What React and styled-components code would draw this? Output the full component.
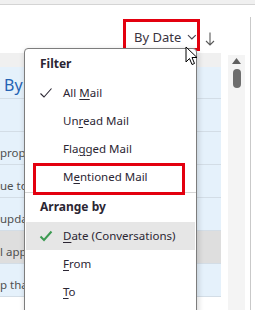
import React from "react";
import styled, { createGlobalStyle } from "styled-components";

const GlobalStyle = createGlobalStyle`
  html, body {
    margin: 0;
    padding: 0;
    background: #ffffff;
    overflow: hidden;
  }
  body {
    font-family: "Noto Sans", "Open Sans", sans-serif;
  }
`;

const Frame = styled.div`
  position: relative;
  width: 255px;
  height: 310px;
  overflow: hidden;
  display: flex;
  flex-direction: column;
  background: #ffffff;
`;

const TopStrip = styled.div`
  height: 4px;
  background: #f0f0f0;
  border-bottom: 1px solid #d4d4d4;
`;

const Workspace = styled.div`
  flex: 1;
  display: flex;
`;

const Main = styled.div`
  width: 250px;
  display: flex;
  flex-direction: column;
`;

const Edge = styled.div`
  flex: 1;
  margin-top: 12px;
  border-left: 1px solid #c9c9c9;
`;

const Toolbar = styled.div`
  height: 48px;
  display: flex;
  justify-content: flex-end;
  align-items: flex-start;
  gap: 5px;
  padding: 14px 35px 0 0;
  box-sizing: border-box;
`;

const SortButton = styled.div`
  width: 77px;
  height: 32px;
  box-sizing: border-box;
  border: 3px solid #e3000f;
  display: flex;
  align-items: center;
  padding: 3px 0 0 8px;
  gap: 6px;
  font-size: 13px;
  color: #3a3340;
  white-space: nowrap;
`;

const ArrowSlot = styled.div`
  padding-top: 13px;
  display: flex;
`;

const ListArea = styled.div`
  flex: 1;
  display: flex;
`;

const List = styled.div`
  width: 221px;
  display: flex;
  flex-direction: column;
`;

const ListHeader = styled.div`
  height: 14px;
  background: #f0f0f0;
`;

const Row = styled.div`
  height: ${(p) => (p.$first ? 32 : 33)}px;
  box-sizing: border-box;
  border-bottom: 1px solid #d3dde6;
  background: ${(p) => (p.$hover ? "#dedede" : "#e5f1fb")};
  display: flex;
  align-items: flex-end;
  padding-bottom: 3px;
  overflow: hidden;
  white-space: nowrap;
`;

const GroupLabel = styled.span`
  font-size: 16px;
  line-height: 20px;
  color: #2563b3;
  padding-left: 4px;
`;

const Preview = styled.span`
  font-size: 11.5px;
  line-height: 16px;
  color: #505050;
`;

const Track = styled.div`
  width: 17px;
  margin: 2px 0 0 7px;
  background: #f4f4f4;
  display: flex;
  flex-direction: column;
  align-items: center;
  padding-top: 3px;
  gap: 5px;
`;

const Thumb = styled.div`
  width: 8px;
  height: 19px;
  border-radius: 4px;
  background: #6e6e6e;
`;

const Menu = styled.div`
  position: absolute;
  left: 24px;
  top: 48px;
  width: 173px;
  height: 280px;
  box-sizing: border-box;
  background: #ffffff;
  border: 1px solid #7d7d7d;
  border-radius: 4px 4px 0 0;
  box-shadow: 1px 2px 6px rgba(0, 0, 0, 0.18);
  display: flex;
  flex-direction: column;
  color: #2b2633;
  font-size: 11.5px;
`;

const SectionTitle = styled.div`
  height: 29px;
  box-sizing: border-box;
  padding: 2px 0 0 15px;
  line-height: 24px;
  font-weight: 700;
  font-size: 12px;
  margin-top: ${(p) => (p.$top ? 1 : 0)}px;
`;

const Item = styled.div`
  position: relative;
  height: 28px;
  margin: 0 1px;
  display: flex;
  align-items: center;
  background: ${(p) => (p.$active ? "#e6e6e6" : "transparent")};

  ${(p) =>
    p.$marked &&
    `
    &::after {
      content: "";
      position: absolute;
      left: 7px;
      right: 10px;
      top: 0;
      bottom: -4px;
      border: 3px solid #e3000f;
    }
  `}
`;

const CheckSlot = styled.div`
  width: 37px;
  display: flex;
  justify-content: center;
  padding-left: 2px;
  box-sizing: border-box;
`;

const Label = styled.span`
  line-height: 16px;
  white-space: nowrap;
`;

const Key = styled.span`
  text-decoration: underline;
  text-underline-offset: 2px;
`;

const Separator = styled.div`
  height: 1px;
  margin-top: 1px;
  background: #d6d6d6;
`;

const Cursor = styled.svg`
  position: absolute;
  left: 185px;
  top: 46px;
`;

const Chevron = () => (
  <svg width="10" height="6" viewBox="0 0 10 6">
    <path d="M1 1 L5 5 L9 1" fill="none" stroke="#4a4450" strokeWidth="1.2" />
  </svg>
);

const DownArrow = () => (
  <svg width="10" height="14" viewBox="0 0 10 14">
    <path d="M5 0.5 V13 M1 9 L5 13 L9 9" fill="none" stroke="#5a5a5a" strokeWidth="1.1" />
  </svg>
);

const Check = ({ color = "#2b2633", bold }) => (
  <svg width="14" height="12" viewBox="0 0 14 12">
    <path
      d="M1.5 6.5 L5 10 L12.5 1.5"
      fill="none"
      stroke={color}
      strokeWidth={bold ? 2 : 1.1}
    />
  </svg>
);

const UpTriangle = () => (
  <svg width="9" height="6" viewBox="0 0 9 6">
    <path d="M4.5 0 L9 6 L0 6 Z" fill="#606060" />
  </svg>
);

const previews = ["proposal for", "ue to the", "update on", "l approval", "p that"];

const App = () => {
  return (
    <>
      <GlobalStyle />
      <Frame>
        <TopStrip />
        <Workspace>
          <Main>
            <Toolbar>
              <SortButton>
                By Date <Chevron />
              </SortButton>
              <ArrowSlot>
                <DownArrow />
              </ArrowSlot>
            </Toolbar>
            <ListArea>
              <List>
                <ListHeader />
                <Row $first>
                  <GroupLabel>By</GroupLabel>
                </Row>
                <Row />
                {previews.map((text, i) => (
                  <Row key={text} $hover={i === 3}>
                    <Preview>{text}</Preview>
                  </Row>
                ))}
              </List>
              <Track>
                <UpTriangle />
                <Thumb />
              </Track>
            </ListArea>
          </Main>
          <Edge />
        </Workspace>

        <Menu>
          <SectionTitle $top>Filter</SectionTitle>
          <Item>
            <CheckSlot>
              <Check />
            </CheckSlot>
            <Label>
              All <Key>M</Key>ail
            </Label>
          </Item>
          <Item>
            <CheckSlot />
            <Label>
              Un<Key>r</Key>ead Mail
            </Label>
          </Item>
          <Item>
            <CheckSlot />
            <Label>
              Fla<Key>g</Key>ged Mail
            </Label>
          </Item>
          <Item $marked>
            <CheckSlot />
            <Label>
              M<Key>e</Key>ntioned Mail
            </Label>
          </Item>
          <Separator />
          <SectionTitle>Arrange by</SectionTitle>
          <Item $active>
            <CheckSlot>
              <Check color="#3c9a52" bold />
            </CheckSlot>
            <Label>
              <Key>D</Key>ate (Conversations)
            </Label>
          </Item>
          <Item>
            <CheckSlot />
            <Label>
              <Key>F</Key>rom
            </Label>
          </Item>
          <Item>
            <CheckSlot />
            <Label>
              <Key>T</Key>o
            </Label>
          </Item>
        </Menu>

        <Cursor width="14" height="21" viewBox="0 0 14 21">
          <path
            d="M1 1 L1 16 L4.5 12.5 L7 18.5 L9.5 17.5 L7 11.5 L12 11.5 Z"
            fill="#ffffff"
            stroke="#000000"
            strokeWidth="1"
            strokeLinejoin="round"
          />
        </Cursor>
      </Frame>
    </>
  );
};

export default App;
